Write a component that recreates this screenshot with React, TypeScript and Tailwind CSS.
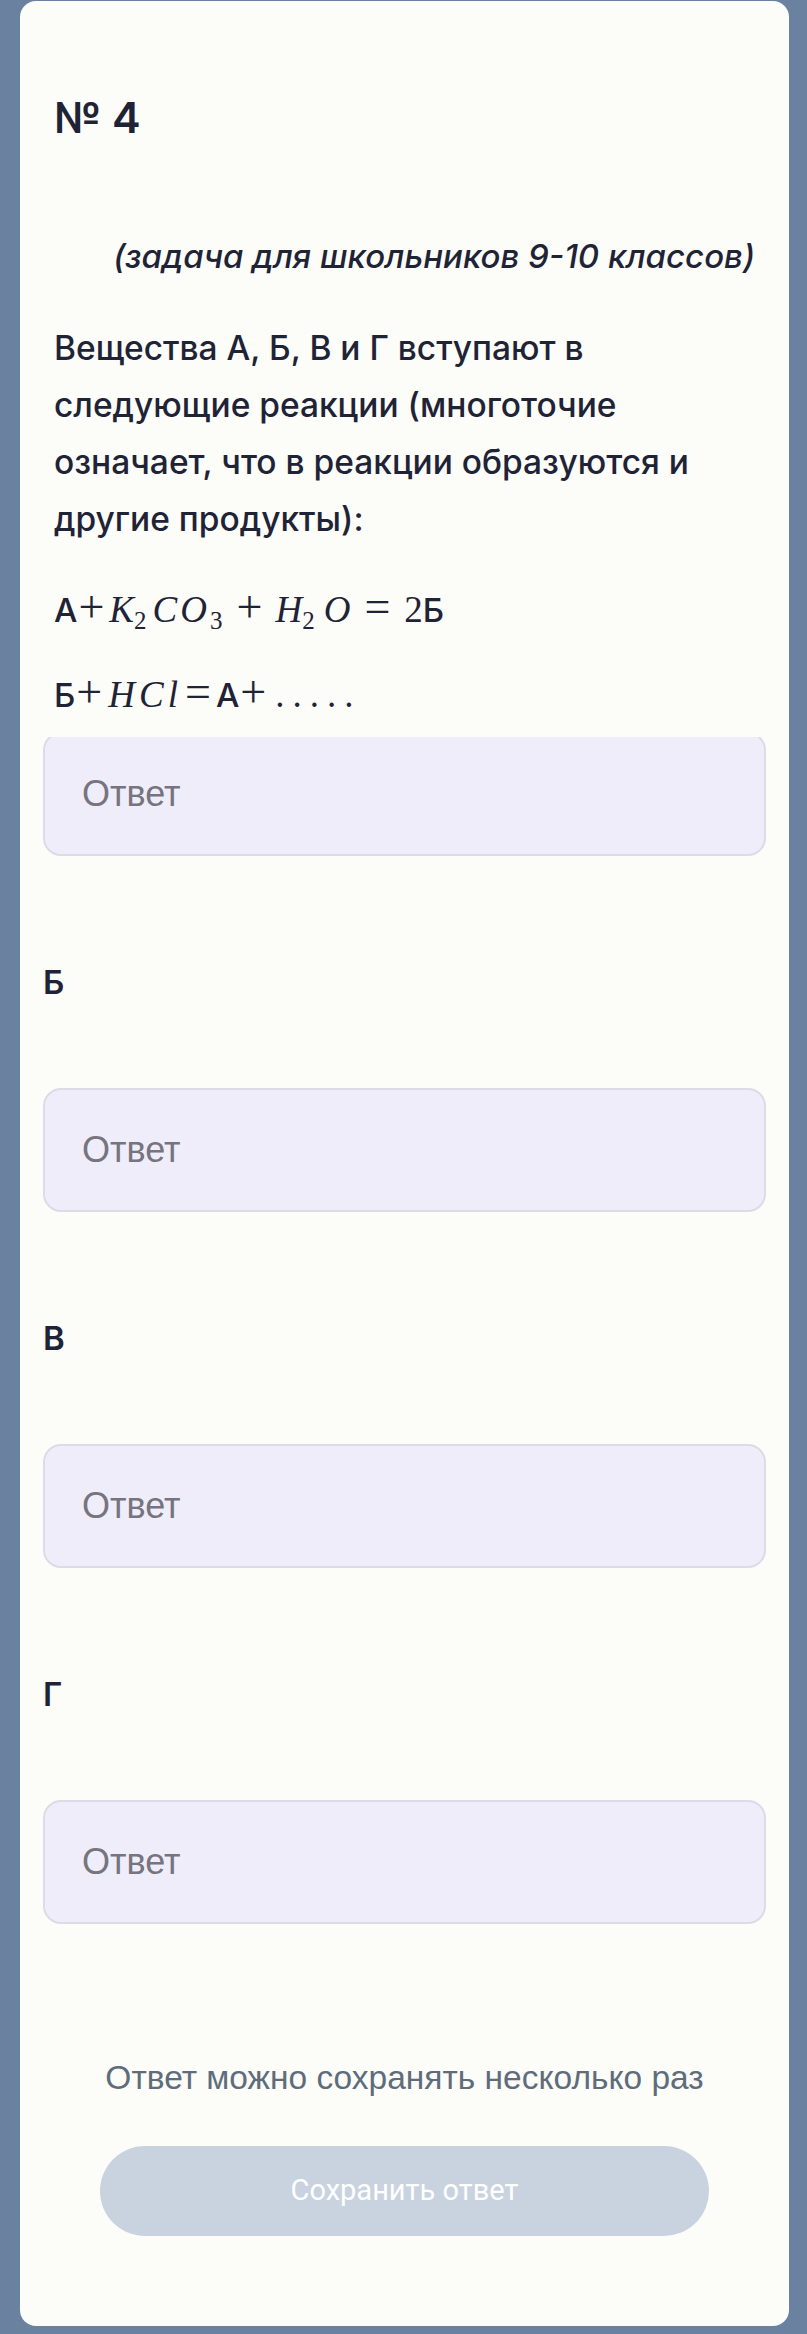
import { useState } from 'react';

const sans = { fontFamily: 'Inter, "Liberation Sans", sans-serif' };

function Sub({ children, className = '' }: { children: string; className?: string }) {
    return <span className={`text-[25px] relative top-[7px] ${className}`}>{children}</span>;
}

function Op({ children, className = '' }: { children: string; className?: string }) {
    return <span className={`text-[46px] leading-none ${className}`}>{children}</span>;
}

function Cyr({ children }: { children: string }) {
    return <span className="font-['Inter',sans-serif] text-[33px] font-medium">{children}</span>;
}

function Formulas() {
    return (
        <div className="font-['Liberation_Serif',serif] text-[37px] text-[#1f2336]">
            {/* first reaction */}
            <div className="mt-[34px] h-[57px] flex items-baseline">
                <Cyr>А</Cyr>
                <Op className="mx-[1px]">+</Op>
                <i className="ml-[4px]">K</i>
                <Sub>2</Sub>
                <i className="ml-[6px] tracking-[3px]">CO</i>
                <Sub>3</Sub>
                <Op className="ml-[14px] mr-[13px]">+</Op>
                <i>H</i>
                <Sub>2</Sub>
                <i className="ml-[9px]">O</i>
                <Op className="ml-[14px] mr-[14px]">=</Op>
                <span>2</span>
                <Cyr>Б</Cyr>
            </div>
            {/* second reaction */}
            <div className="mt-[28px] h-[57px] flex items-baseline">
                <Cyr>Б</Cyr>
                <Op className="mx-[1px]">+</Op>
                <i className="ml-[5px] tracking-[4px]">HCl</i>
                <Op className="ml-[3px] mr-[5px]">=</Op>
                <Cyr>А</Cyr>
                <Op className="mx-[1px]">+</Op>
                <span className="ml-[8px] tracking-[8px]">.....</span>
            </div>
        </div>
    );
}

function AnswerInput({ clipped }: { clipped?: boolean }) {
    const [value, setValue] = useState('');
    const input = (
        <input
            value={value}
            onChange={e => setValue(e.target.value)}
            placeholder="Ответ"
            className={`block w-full h-[124px] rounded-[18px] border-2 border-[#dcdbe6] bg-[#efedfa] pl-[37px] text-[36px] text-[#1f2336] placeholder:text-[#76747e] outline-none font-['Liberation_Sans',sans-serif] ${clipped ? '-mt-[5px]' : ''}`}
        />
    );
    if (clipped) {
        return <div className="h-[119px] overflow-hidden">{input}</div>;
    }
    return input;
}

function Question({ letter }: { letter: string }) {
    return (
        <div>
            <div className="mt-[106px] h-[40px] leading-[40px] text-[33px] font-semibold text-[#1f2336]">{letter}</div>
            <div className="mt-[86px]">
                <AnswerInput />
            </div>
        </div>
    );
}

export default function App() {
    return (
        <div className="min-h-[2334px] bg-[#6a82a0] pt-[1px] pl-[20px] pr-[18px] pb-[9px]" style={sans}>
            <div className="bg-[#fcfcf8] rounded-[16px] pb-[90px]">
                <div className="px-[34px] pt-[91px]">
                    <h2 className="text-[43px] leading-[50px] font-semibold text-[#1f2336]">№ 4</h2>
                    <p className="mt-[89px] text-right italic text-[33px] leading-[50px] font-medium text-[#1f2336]">
                        (задача для школьников 9-10 классов)
                    </p>
                    <p className="mt-[39px] text-[33.5px] leading-[57px] font-medium text-[#1f2336]">
                        Вещества А, Б, В и Г вступают в следующие реакции (многоточие означает, что в реакции образуются и другие продукты):
                    </p>
                    <Formulas />
                </div>

                <div className="px-[23px] mt-[13px]">
                    <AnswerInput clipped />
                    <Question letter="Б" />
                    <Question letter="В" />
                    <Question letter="Г" />
                </div>

                <p className="mt-[134px] h-[40px] leading-[40px] text-center text-[33.5px] text-[#5f6c7b] font-['Liberation_Sans',sans-serif]">
                    Ответ можно сохранять несколько раз
                </p>
                <button
                    type="button"
                    disabled
                    className="block mx-auto mt-[48px] w-[609px] h-[90px] rounded-full bg-[#c9d3df] text-white text-[29px] font-['Roboto',sans-serif]"
                >
                    Сохранить ответ
                </button>
            </div>
        </div>
    );
}
